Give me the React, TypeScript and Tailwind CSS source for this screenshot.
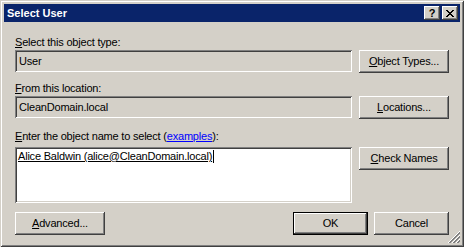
import type { ReactNode } from "react";

// Classic Win2k/2003 bevels
const raised =
  "shadow-[inset_-1px_-1px_#404040,inset_1px_1px_#ffffff,inset_-2px_-2px_#808080,inset_2px_2px_#d4d0c8]";
const sunken =
  "shadow-[inset_1px_1px_#808080,inset_-1px_-1px_#ffffff,inset_2px_2px_#404040,inset_-2px_-2px_#d4d0c8]";

function Btn({
  children,
  className = "",
  isDefault = false,
}: {
  children: ReactNode;
  className?: string;
  isDefault?: boolean;
}) {
  return (
    <div
      className={`flex items-center justify-center h-[23px] bg-[#d4d0c8] shrink-0 ${raised} ${
        isDefault ? "border border-black" : ""
      } ${className}`}
    >
      {children}
    </div>
  );
}

function Acc({ children }: { children: ReactNode }) {
  return <span className="underline underline-offset-[1px]">{children}</span>;
}

function CaptionBtn({ children }: { children: ReactNode }) {
  return (
    <div
      className={`w-[16px] h-[14px] bg-[#d4d0c8] flex items-center justify-center ${raised}`}
    >
      {children}
    </div>
  );
}

export default function App() {
  return (
    <div
      className={`relative w-[464px] h-[247px] bg-[#d4d0c8] p-[4px] flex flex-col text-[11px] tracking-[-0.2px] leading-[13px] text-black font-['Liberation_Sans',Arial,sans-serif] shadow-[inset_1px_1px_#d4d0c8,inset_-1px_-1px_#404040,inset_2px_2px_#ffffff,inset_-2px_-2px_#808080]`}
    >
      {/* Caption */}
      <div className="h-[18px] bg-[#0a246a] flex items-center pl-[3px] pr-[2px]">
        <span className="text-white font-bold tracking-normal text-[11px]">
          Select User
        </span>
        <div className="ml-auto flex gap-[2px]">
          <CaptionBtn>
            <span className="font-bold text-[11px] leading-none tracking-normal mt-[1px]">
              ?
            </span>
          </CaptionBtn>
          <CaptionBtn>
            <svg width="8" height="7" viewBox="0 0 8 7" shapeRendering="crispEdges">
              <path
                d="M0 0h2v1H0zM6 0h2v1H6zM1 1h2v1H1zM5 1h2v1H5zM2 2h4v1H2zM3 3h2v1H3zM2 4h4v1H2zM1 5h2v1H1zM5 5h2v1H5zM0 6h2v1H0zM6 6h2v1H6z"
                fill="#000"
              />
            </svg>
          </CaptionBtn>
        </div>
      </div>

      {/* Body */}
      <div className="flex flex-col px-[11px]">
        <div className="mt-[14px]">
          <Acc>S</Acc>elect this object type:
        </div>
        <div className="mt-[1px] flex items-start gap-[7px]">
          <div className={`flex-1 h-[22px] flex items-center pl-[4px] ${sunken}`}>
            User
          </div>
          <Btn className="w-[90px]">
            <span>
              <Acc>O</Acc>bject Types...
            </span>
          </Btn>
        </div>

        <div className="mt-[9px]">
          <Acc>F</Acc>rom this location:
        </div>
        <div className="mt-[1px] flex items-start gap-[7px]">
          <div className={`flex-1 h-[22px] flex items-center pl-[4px] ${sunken}`}>
            CleanDomain.local
          </div>
          <Btn className="w-[90px]">
            <span>
              <Acc>L</Acc>ocations...
            </span>
          </Btn>
        </div>

        <div className="mt-[11px]">
          <Acc>E</Acc>nter the object name to select (
          <span className="text-[#0000ff] underline underline-offset-[1px]">examples</span>
          ):
        </div>
        <div className="mt-[4px] flex items-start gap-[7px]">
          <div className={`flex-1 h-[56px] bg-white pl-[3px] pt-[3px] ${sunken}`}>
            <span className="underline underline-offset-[1px]">
              Alice Baldwin (alice@CleanDomain.local)
            </span>
            <span className="inline-block w-px h-[13px] bg-black align-top ml-[1px]" />
          </div>
          <Btn className="w-[90px]">
            <span>
              <Acc>C</Acc>heck Names
            </span>
          </Btn>
        </div>

        <div className="mt-[9px] flex items-center">
          <Btn className="w-[90px]">
            <span>
              <Acc>A</Acc>dvanced...
            </span>
          </Btn>
          <div className="flex-1" />
          <Btn className="w-[75px]" isDefault>
            OK
          </Btn>
          <Btn className="w-[75px] ml-[6px]">Cancel</Btn>
        </div>
      </div>

      {/* Size grip */}
      <svg
        className="absolute right-[4px] bottom-[4px]"
        width="12"
        height="12"
        viewBox="0 0 12 12"
        shapeRendering="crispEdges"
      >
        {[0, 4, 8].map((o) => (
          <g key={o}>
            <line x1={12} y1={o} x2={o} y2={12} stroke="#ffffff" strokeWidth={1} />
            <line x1={12} y1={o + 1} x2={o + 1} y2={12} stroke="#808080" strokeWidth={1} />
            <line x1={12} y1={o + 2} x2={o + 2} y2={12} stroke="#808080" strokeWidth={1} />
          </g>
        ))}
      </svg>
    </div>
  );
}
